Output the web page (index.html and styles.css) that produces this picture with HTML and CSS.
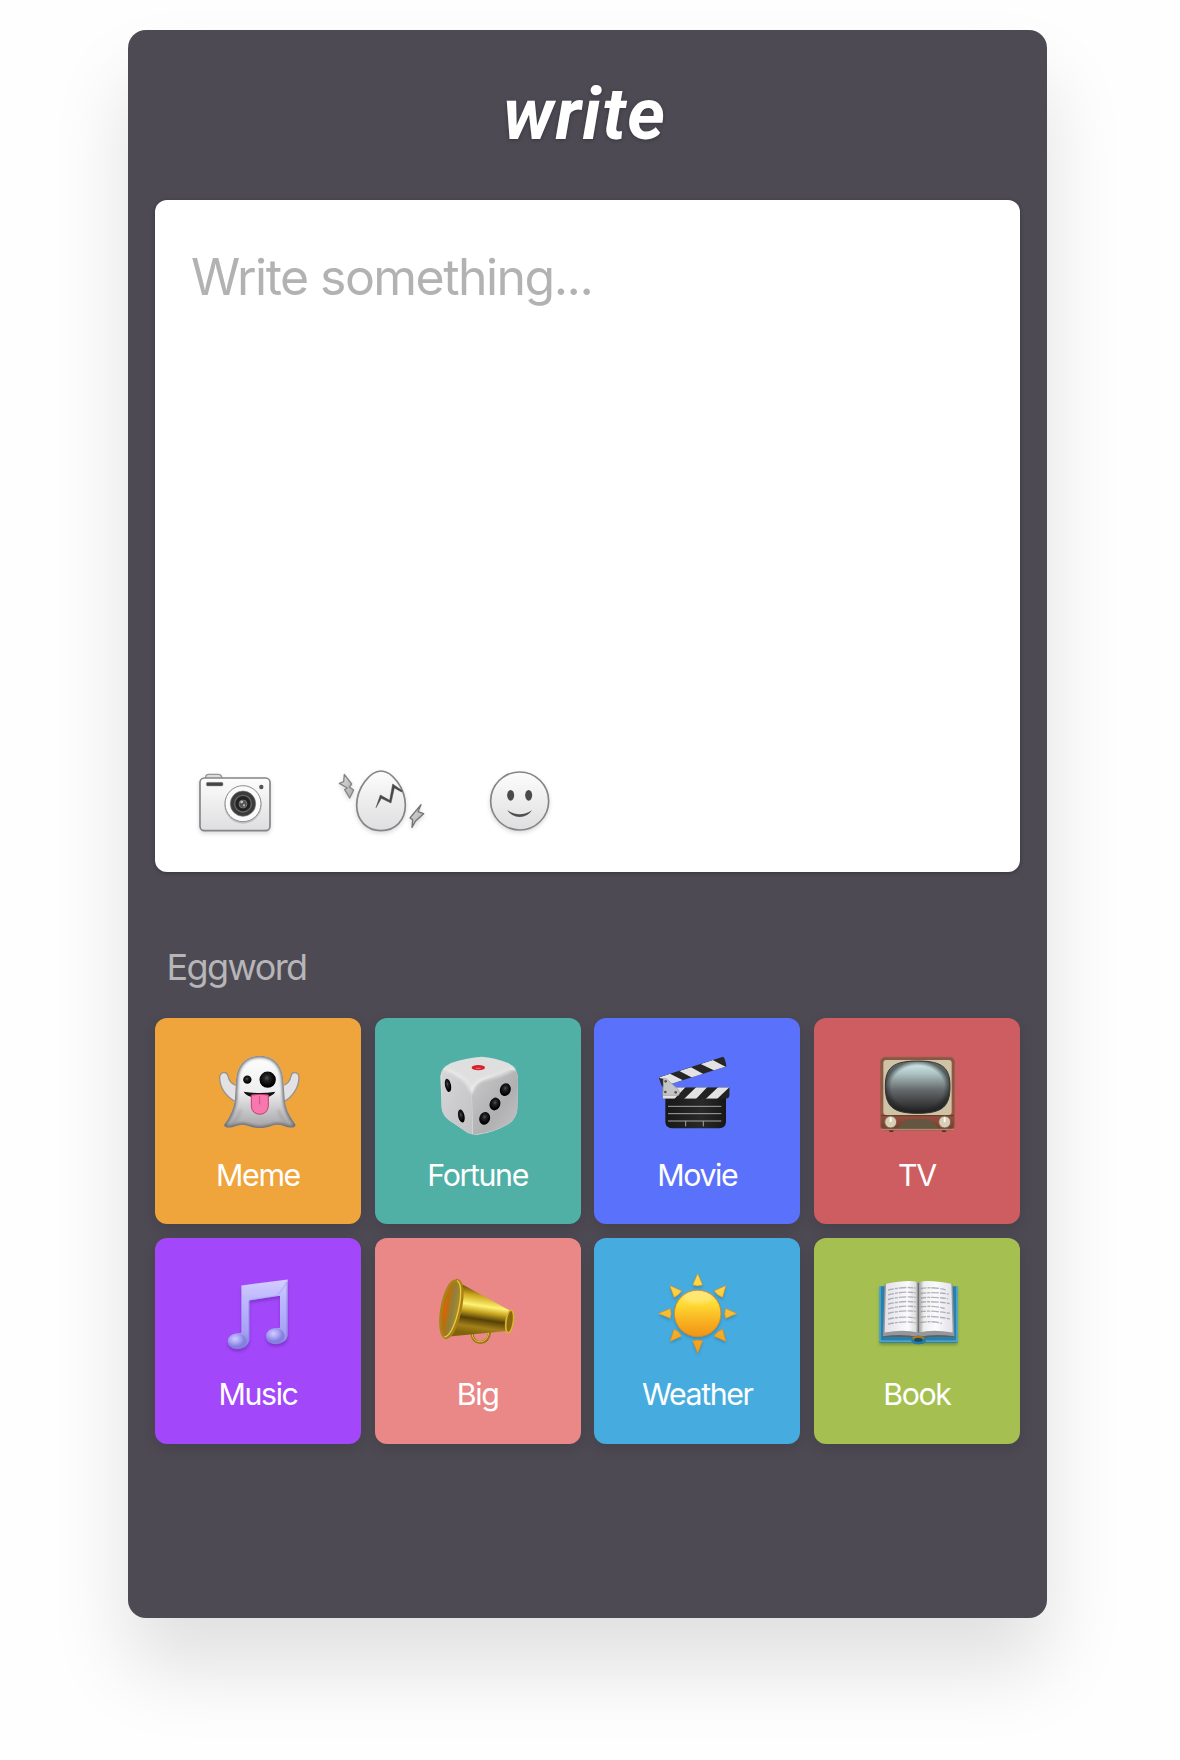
FILE: index.html
```html
<!DOCTYPE html>
<html lang="en">
<head>
<meta charset="utf-8">
<title>write</title>
<link rel="stylesheet" href="styles.css">
</head>
<body>
<main class="card">
  <h1 class="logo">write</h1>

  <section class="editor">
    <p class="placeholder">Write something...</p>
    <div class="tools">
      <svg class="tool tool-camera" viewBox="50 50 230 210">
        <defs>
          <linearGradient id="metal" x1="0" y1="0" x2="0" y2="1"><stop offset="0" stop-color="#fdfdfd"/><stop offset="1" stop-color="#dedee0"/></linearGradient>
          <linearGradient id="bolt" x1="0" y1="0" x2="1" y2="1"><stop offset="0" stop-color="#ddd"/><stop offset="1" stop-color="#aaa"/></linearGradient>
        </defs>
        <path d="M76 84V80Q77 72 85 72H114Q122 72 124 80V84" fill="#ddd" stroke="#999" stroke-width="4"/>
        <rect x="59" y="83" width="210" height="158" rx="13" fill="url(#metal)" stroke="#858587" stroke-width="5"/>
        <rect x="78" y="96" width="50" height="11" rx="4" fill="#454545" stroke="#999" stroke-width="1.5"/>
        <circle cx="243" cy="110" r="6.500" fill="#555"/>
        <circle cx="188" cy="164" r="56" fill="#aaa" opacity=".6"/>
        <circle cx="188" cy="160" r="54" fill="#fafafa" stroke="#8c8c8c" stroke-width="3"/>
        <circle cx="188" cy="160" r="38" fill="#3b3b3b" stroke="#777" stroke-width="2"/>
        <circle cx="188" cy="160" r="25" fill="#222" stroke="#686868" stroke-width="4"/>
        <circle cx="188" cy="161" r="12" fill="#555" stroke="#8a8a8a" stroke-width="2"/>
        <circle cx="184" cy="155" r="4" fill="#ccc"/><circle cx="191" cy="165" r="3.500" fill="#bbb"/>
      </svg>
      <svg class="tool tool-egg" viewBox="465 50 270 210">
        <path d="M603 62C635 62 676 112 676 165C676 210 646 241 603 241C560 241 530 210 530 165C530 112 571 62 603 62Z" fill="url(#metal)" stroke="#858587" stroke-width="5"/>
        <path d="M588 172L601 134L629 150L638 101L667 121L665 125L643 113L633 158L604 144Z" fill="#484848" stroke="#484848" stroke-width="1.5"/>
        <path d="M493 72L515 101L508 110L521 119L509 143L494 118L502 113L478 99L491 94Z" fill="url(#bolt)" stroke="#858585" stroke-width="4" stroke-linejoin="round"/>
        <path d="M723 163L714 184L731 190L706 213L696 231L698 208L690 203Z" fill="url(#bolt)" stroke="#757575" stroke-width="4" stroke-linejoin="round"/>
      </svg>
      <svg class="tool tool-smile" viewBox="920 50 200 210">
        <circle cx="1018" cy="152" r="87" fill="url(#metal)" stroke="#858587" stroke-width="5"/>
        <ellipse cx="991" cy="135" rx="10.500" ry="16" fill="#4a4a4a"/>
        <ellipse cx="1045" cy="135" rx="10.500" ry="16" fill="#4a4a4a"/>
        <path d="M981 180Q1018 204 1055 180Q1042 200 1018 200Q994 200 981 180Z" fill="#505050"/>
      </svg>
    </div>
  </section>

  <h2 class="heading">Eggword</h2>

  <section class="grid">
    <div class="tile tile-meme">
      <svg class="icon" viewBox="15 25 618 408">
        <defs>
          <linearGradient id="ghost" x1="0" y1="0" x2="0" y2="1"><stop offset="0" stop-color="#fff"/><stop offset=".5" stop-color="#eeeef0"/><stop offset="1" stop-color="#a0a0a2"/></linearGradient>
          <radialGradient id="eye" cx=".45" cy=".4"><stop offset="0" stop-color="#555"/><stop offset=".35" stop-color="#222"/><stop offset="1" stop-color="#000"/></radialGradient>
          <filter id="edge" x="-20%" y="-20%" width="140%" height="140%"><feGaussianBlur stdDeviation="4"/></filter>
          <clipPath id="ghostClip"><path d="M329 138C372 138 398 168 400 212L404 266C406 300 420 322 437 345C436 356 420 356 402 349C388 344 374 344 362 350C342 357 317 357 298 350C284 344 270 344 256 350C240 356 224 355 222 346C240 322 252 298 255 266L258 212C260 168 286 138 329 138Z"/></clipPath>
        </defs>
        <path d="M258 277C228 262 208 232 209 203C210 186 230 183 234 199C237 216 246 224 261 228ZM400 277C429 262 447 232 447 203C446 186 427 183 423 199C420 216 412 224 397 228Z" fill="#e2e2e4" stroke="#99928b" stroke-width="4"/>
        <g clip-path="url(#ghostClip)">
          <rect x="215" y="130" width="230" height="230" fill="url(#ghost)"/>
          <path d="M329 138C372 138 398 168 400 212L404 266C406 300 420 322 437 345C436 356 420 356 402 349C388 344 374 344 362 350C342 357 317 357 298 350C284 344 270 344 256 350C240 356 224 355 222 346C240 322 252 298 255 266L258 212C260 168 286 138 329 138Z" fill="none" stroke="#6a6a6c" stroke-width="11" filter="url(#edge)"/>
          <path d="M272 300Q262 330 244 346M385 300Q396 330 412 346" fill="none" stroke="#777" stroke-width="7" opacity=".35" filter="url(#edge)"/>
        </g>
        <circle cx="292" cy="210" r="12.500" fill="url(#eye)"/>
        <circle cx="353" cy="210" r="24.500" fill="url(#eye)"/>
        <path d="M281 246Q329 254 376 246Q368 264 329 265Q290 264 281 246Z" fill="#111"/>
        <path d="M304 256Q329 252 355 256V290Q352 313 329 314Q306 312 304 290Z" fill="#f877af" stroke="#c23b70" stroke-width="3"/>
        <path d="M329 260V284" stroke="#d64a83" stroke-width="3"/>
      </svg>
      <span class="label">Meme</span>
    </div>
    <div class="tile tile-fortune">
      <svg class="icon" viewBox="12 25 618 408">
        <defs>
          <linearGradient id="dl" x1="0" y1="0" x2="1" y2="1"><stop offset="0" stop-color="#d6d6d8"/><stop offset="1" stop-color="#c2c2c4"/></linearGradient>
          <linearGradient id="dr" x1="0" y1="0" x2="1" y2="1"><stop offset="0" stop-color="#c9c9ca"/><stop offset=".6" stop-color="#b0b0b2"/><stop offset="1" stop-color="#c5c5c7"/></linearGradient>
        </defs>
        <path d="M240 160Q290 143 332 141Q370 143 413 161Q438 174 441 205L439 298Q436 327 414 342Q370 368 320 375Q300 377 282 364L232 330Q216 318 212 295L208 200Q210 174 240 160Z" fill="#dfdfe0"/>
        <path d="M212 190Q213 176 230 182L278 210Q301 225 302 250L304 374Q292 372 282 364L232 330Q216 318 212 295Z" fill="url(#dl)"/>
        <path d="M303 260Q304 222 344 209L415 181Q440 176 441 205L439 298Q436 327 414 342Q370 368 306 375Z" fill="url(#dr)"/>
        <path d="M221 178Q290 203 302 248Q308 215 346 206Q395 195 430 175" fill="none" stroke="#ececed" stroke-width="9" opacity=".8" filter="url(#edge)"/>
        <ellipse cx="322" cy="174" rx="20" ry="8" fill="#d9222a"/><path d="M315 176h14" stroke="#f3a0a0" stroke-width="2"/>
        <g fill="url(#eye)">
          <ellipse cx="231" cy="227" rx="9" ry="20" transform="rotate(-12 231 227)"/>
          <ellipse cx="271" cy="319" rx="9.500" ry="20" transform="rotate(-12 271 319)"/>
          <ellipse cx="403" cy="240" rx="16" ry="19.500" transform="rotate(20 403 240)"/>
          <ellipse cx="372" cy="283" rx="16" ry="19.500" transform="rotate(20 372 283)"/>
          <ellipse cx="341" cy="326" rx="16" ry="19.500" transform="rotate(20 341 326)"/>
        </g>
      </svg>
      <span class="label">Fortune</span>
    </div>
    <div class="tile tile-movie">
      <svg class="icon" viewBox="14 25 618 408">
        <defs>
          <linearGradient id="board" x1="0" y1="0" x2="1" y2="0"><stop offset="0" stop-color="#181818"/><stop offset=".6" stop-color="#292929"/><stop offset="1" stop-color="#171717"/></linearGradient>
          <clipPath id="armClip"><path d="M209 203L401 141Q406 142 412 170L228 228Q216 226 209 203Z"/></clipPath>
          <clipPath id="barClip"><path d="M219 233H421V256Q420 266 410 267H219Z"/></clipPath>
        </defs>
        <path d="M228 262H410V337Q409 354 390 356H248Q229 355 228 337Z" fill="url(#board)"/>
        <g clip-path="url(#armClip)">
          <rect x="205" y="138" width="210" height="95" fill="#262626"/>
          <path d="M210 203L242 192L281 212L243 226L217 222ZM270 184L305 173L346 195L312 206ZM334 163L370 151L410 172L378 184Z" fill="#e3e3e3"/>
        </g>
        <g clip-path="url(#barClip)">
          <rect x="217" y="231" width="206" height="38" fill="#222"/>
          <path d="M219 232H289L255 268H219ZM321 232H354L320 268H284ZM387 232H421L383 268H349Z" fill="#e3e3e3"/>
        </g>
        <path d="M209 205L223 207L221 232L216 226Z" fill="#282828"/>
        <path d="M222 209Q226 204 232 208L266 239Q274 249 268 257L222 257Q218 252 222 246Z" fill="#c4c5c6" stroke="#999" stroke-width="2"/>
        <g fill="#555"><circle cx="229" cy="215" r="4"/><circle cx="228" cy="247" r="4"/><circle cx="259" cy="248" r="4"/></g>
        <path d="M236 290H396M236 312H396M236 334H396M289 334V350M342 334V350" stroke="#a5a5a5" stroke-width="3"/>
      </svg>
      <span class="label">Movie</span>
    </div>
    <div class="tile tile-tv">
      <svg class="icon" viewBox="12 25 618 408">
        <defs>
          <linearGradient id="screen" x1="0" y1="0" x2="0" y2="1"><stop offset="0" stop-color="#d9f2f0"/><stop offset=".25" stop-color="#abc1c2"/><stop offset=".55" stop-color="#666a6c"/><stop offset="1" stop-color="#1c1c1d"/></linearGradient>
          <radialGradient id="vig"><stop offset=".82" stop-color="#222" stop-opacity="0"/><stop offset="1" stop-color="#222" stop-opacity=".65"/></radialGradient>
          <linearGradient id="wood" x1="0" y1="0" x2="0" y2="1"><stop offset="0" stop-color="#8d5544"/><stop offset=".75" stop-color="#9c5544"/><stop offset="1" stop-color="#793b2d"/></linearGradient>
        </defs>
        <path d="M235 358h18l-4 9h-10ZM393 358h18l-4 9h-10Z" fill="#552b24"/>
        <rect x="212" y="143" width="221" height="218" rx="13" fill="url(#wood)" stroke="#8c6249" stroke-width="3"/>
        <rect x="220" y="151" width="205" height="165" rx="9" fill="#cfc3a6"/>
        <path d="M323 154C398 154 420 175 420 230C420 290 398 311 323 311C248 311 226 290 226 230C226 175 248 154 323 154Z" fill="url(#screen)"/>
        <path d="M323 154C398 154 420 175 420 230C420 290 398 311 323 311C248 311 226 290 226 230C226 175 248 154 323 154Z" fill="url(#vig)" stroke="#333" stroke-width="3"/>
        <path d="M213 318H432" stroke="#713b2d" stroke-width="4"/>
        <path d="M262 357Q280 330 300 329H348Q370 332 386 357Z" fill="#655641"/>
        <path d="M215 359H431" stroke="#b39b77" stroke-width="3"/>
        <g fill="#d8cfb5" stroke="#756450" stroke-width="3"><circle cx="242" cy="337" r="18"/><circle cx="404" cy="337" r="18"/></g>
        <path d="M242 326v9M404 326v9" stroke="#fffbea" stroke-width="6" stroke-linecap="round"/>
      </svg>
      <span class="label">TV</span>
    </div>
    <div class="tile tile-music">
      <svg class="icon" viewBox="15 23.500 618 408">
        <defs>
          <linearGradient id="note" x1="0" y1="0" x2="0" y2="1"><stop offset="0" stop-color="#d3ceff"/><stop offset=".25" stop-color="#c0bbff"/><stop offset=".75" stop-color="#a5a2f4"/><stop offset="1" stop-color="#7c77d8"/></linearGradient>
          <radialGradient id="head" cx=".4" cy=".35"><stop offset="0" stop-color="#d0cdff"/><stop offset=".55" stop-color="#aaa5f4"/><stop offset="1" stop-color="#8580df"/></radialGradient>
        </defs>
        <path d="M274 166L413 148V318Q411 340 379 342Q350 342 348 318Q352 294 390 293V197L298 211V331Q292 357 262 357Q234 355 233 333Q237 309 274 308Z" fill="#5d21a0" opacity=".5" transform="translate(0 7)" filter="url(#edge)"/>
        <path d="M274 166L413 148V315Q411 338 379 342Q350 342 348 318Q352 294 390 293V197L298 211V331Q292 357 262 357Q234 355 233 333Q237 309 274 308Z" fill="url(#note)"/>
        <ellipse cx="261" cy="333" rx="28" ry="23" fill="url(#head)"/><ellipse cx="376" cy="317" rx="28" ry="23" fill="url(#head)"/>
        <path d="M297 212V330M411 155V315" stroke="#8481da" stroke-width="3" opacity=".7"/>
        <path d="M299 209L378 197Q395 184 411 155" fill="none" stroke="#9794eb" stroke-width="4" opacity=".4"/>
      </svg>
      <span class="label">Music</span>
    </div>
    <div class="tile tile-big">
      <svg class="icon" viewBox="12 23.500 618 408">
        <defs>
          <linearGradient id="gold" gradientUnits="userSpaceOnUse" x1="345" y1="180" x2="325" y2="314"><stop offset="0" stop-color="#7d620b"/><stop offset=".15" stop-color="#cfa91f"/><stop offset=".36" stop-color="#fff273"/><stop offset=".5" stop-color="#c6a41f"/><stop offset=".66" stop-color="#564008"/><stop offset=".84" stop-color="#a38119"/><stop offset="1" stop-color="#806209"/></linearGradient>
          <linearGradient id="bell" x1="0" y1="0" x2="1" y2="0"><stop offset="0" stop-color="#b8730c"/><stop offset=".3" stop-color="#b9700d"/><stop offset=".6" stop-color="#8d8141"/><stop offset="1" stop-color="#bb911d"/></linearGradient>
        </defs>
        <path d="M303 309Q305 337 329 337Q353 335 356 305" fill="none" stroke="#9a7714" stroke-width="9"/>
        <path d="M303 309Q305 335 329 335Q350 333 354 305" fill="none" stroke="#dfbf42" stroke-width="3"/>
        <path d="M264 157L415 240V302L235 319Z" fill="url(#gold)"/>
        <ellipse cx="239" cy="237" rx="27" ry="86" fill="url(#bell)" stroke="#a98317" stroke-width="8" transform="rotate(10 239 237)"/>
        <path d="M255 151C278 150 277 208 259 268C249 300 236 324 220 321" fill="none" stroke="#a88015" stroke-width="11"/>
        <path d="M258 151C274 160 272 211 256 264C246 297 234 318 220 321" fill="none" stroke="#edcc42" stroke-width="4"/>
        <path d="M216 272Q212 242 230 200L225 252Z" fill="#ed5a0c" opacity=".75"/>
        <ellipse cx="416" cy="274" rx="11" ry="34" fill="#8b6911" stroke="#d9b52e" stroke-width="5" transform="rotate(8 416 274)"/>
      </svg>
      <span class="label">Big</span>
    </div>
    <div class="tile tile-weather">
      <svg class="icon" viewBox="14 23.500 618 408">
        <defs>
          <linearGradient id="sun" x1="0" y1="0" x2="0" y2="1"><stop offset="0" stop-color="#ffe575"/><stop offset=".3" stop-color="#ffda32"/><stop offset=".7" stop-color="#f8ad20"/><stop offset="1" stop-color="#ef9415"/></linearGradient>
          <linearGradient id="ray" gradientUnits="userSpaceOnUse" x1="0" y1="130" x2="0" y2="370"><stop offset="0" stop-color="#ffe04a"/><stop offset="1" stop-color="#f29b1b"/></linearGradient>
          <path id="rays" d="M325 130L340 164Q325 171 310 164ZM410 166L400 202Q384 197 374 182ZM443 250L409 265Q403 250 409 235ZM410 334L374 318Q384 302 400 297ZM325 370L310 332Q325 327 340 332ZM242 334L254 297Q269 302 277 318ZM207 250L243 235Q248 250 243 265ZM241 166L277 182Q268 197 254 202Z"/>
        </defs>
        <g fill="#155c83" opacity=".4" transform="translate(0 6)" filter="url(#edge)"><use href="#rays"/><circle cx="325" cy="250" r="71"/></g>
        <use href="#rays" fill="url(#ray)" stroke="#cb8e2d" stroke-width="2"/>
        <circle cx="325" cy="250" r="70" fill="url(#sun)" stroke="#d38b22" stroke-width="3"/>
        <ellipse cx="325" cy="203" rx="43" ry="18" fill="#fff2a0" opacity=".4" filter="url(#edge)"/>
      </svg>
      <span class="label">Weather</span>
    </div>
    <div class="tile tile-book">
      <svg class="icon" viewBox="12 23.500 618 408">
        <defs>
          <linearGradient id="pl" x1="0" y1="0" x2="1" y2="0"><stop offset="0" stop-color="#e0e0e6"/><stop offset=".7" stop-color="#fafaff"/><stop offset=".92" stop-color="#ddd"/><stop offset="1" stop-color="#888"/></linearGradient>
          <linearGradient id="pr" x1="0" y1="0" x2="1" y2="0"><stop offset="0" stop-color="#999"/><stop offset=".15" stop-color="#eee"/><stop offset=".5" stop-color="#fbfbff"/><stop offset="1" stop-color="#e0e0e6"/></linearGradient>
        </defs>
        <path d="M209 175H442V344H209Z" fill="#4a6115" opacity=".5" filter="url(#edge)"/>
        <path d="M208 168H443V338H347Q325 347 304 338H208Z" fill="#2b7fac"/>
        <path d="M210 168V333H305M441 168V333H347" fill="none" stroke="#52b4da" stroke-width="4"/>
        <path d="M222 304H430L434 321Q370 318 346 323H305Q276 318 217 321Z" fill="#5e5f5e"/>
        <path d="M224 161L219 318Q280 309 325 321Q370 309 433 318L428 161Z" fill="#96979b"/>
        <path d="M228 161Q300 147 325 157V307Q280 296 224 307Z" fill="url(#pl)"/>
        <path d="M326 157Q350 147 424 161L428 307Q370 296 326 307Z" fill="url(#pr)"/>
        <path d="M325 158V308" stroke="#676769" stroke-width="3"/>
        <g fill="none" stroke="#85858b" stroke-width="4" stroke-dasharray="17 3 9 3 23 4" opacity=".6">
          <path d="M234 180Q282 168 317 174M234 194Q282 182 317 188M234 208Q282 196 317 202M234 222Q282 210 317 216M234 236Q282 224 317 230M234 250Q282 238 317 244M234 267Q282 256 317 264M234 282Q282 271 317 278"/>
          <path d="M332 175Q370 169 407 179M332 190Q370 184 416 192M332 204Q370 198 414 206M332 216Q370 212 419 220M332 230Q370 225 404 235M332 244Q370 240 421 250M332 261Q370 255 421 267M332 277Q370 271 395 280"/>
        </g>
        <path d="M304 330Q306 317 325 316Q346 317 347 330Q343 342 325 342Q308 341 304 330Z" fill="#237aa8"/>
        <path d="M306 323Q325 311 344 323L338 330Q325 320 312 330Z" fill="#b77916"/>
        <ellipse cx="325" cy="329" rx="13" ry="6" fill="#164b60"/>
      </svg>
      <span class="label">Book</span>
    </div>
  </section>
</main>
</body>
</html>
```
FILE: styles.css
```css
* {
  box-sizing: border-box;
}

body {
  margin: 0;
  padding: 30px 0 0 128px;
  height: 1760px;
  overflow: hidden;
  background: #fefefe;
  font-family: Inter, "Liberation Sans", sans-serif;
}

.card {
  display: flex;
  flex-direction: column;
  width: 918.5px;
  height: 1588px;
  padding: 44.4px 26.5px 0 27px;
  border-radius: 18px;
  background: #4d4a54;
  box-shadow: 0 50px 80px rgba(0, 0, 0, 0.12);
}

.logo {
  margin: 0;
  height: 126px;
  padding: 1px 6px 0 0;
  font: italic 700 72px/80px Roboto, sans-serif;
  letter-spacing: 1.35px;
  text-align: center;
  color: #fff;
  text-shadow: 0 1px 4px rgba(0, 0, 0, 0.3);
}

.editor {
  display: flex;
  flex-direction: column;
  justify-content: space-between;
  height: 671.2px;
  padding: 46.4px 36px 34.9px;
  border-radius: 12px;
  background: #fff;
  box-shadow: 0 1px 4px rgba(0, 0, 0, 0.3);
}

.placeholder {
  margin: 0;
  font-size: 50px;
  line-height: 60px;
  letter-spacing: -1.55px;
  color: #b2b2b2;
}

.tools {
  display: flex;
  gap: 61.67px;
  padding-left: 5.67px;
}

.tool {
  height: 70px;
  filter: drop-shadow(0 2px 2px rgba(0, 0, 0, 0.15));
}

.tool-camera {
  width: 76.67px;
}

.tool-egg {
  width: 90px;
}

.tool-smile {
  width: 66.67px;
}

.heading {
  margin: 73.4px 0 29.4px;
  padding-left: 11.5px;
  font-size: 36px;
  font-weight: 400;
  line-height: 44px;
  letter-spacing: -1.6px;
  color: #b6b5b8;
}

.grid {
  display: grid;
  grid-template-columns: repeat(4, 206px);
  grid-auto-rows: 206px;
  gap: 13.5px 13.67px;
}

.tile {
  display: flex;
  flex-direction: column;
  align-items: center;
  border-radius: 12px;
  box-shadow: 0 5px 14px rgba(0, 0, 0, 0.12);
}

.icon {
  width: 206px;
  height: 136px;
}

.label {
  margin-top: 0.6px;
  font-size: 30.3px;
  line-height: 40px;
  letter-spacing: -1.35px;
  color: #fff;
}

.tile-meme { background: #f0a43c; }
.tile-fortune { background: #50b0a5; }
.tile-movie { background: #5a72fb; }
.tile-tv { background: #cd5d60; }
.tile-music { background: #a347fa; }
.tile-big { background: #ea8887; }
.tile-weather { background: #46ace0; }
.tile-book { background: #a5bf51; }
```
